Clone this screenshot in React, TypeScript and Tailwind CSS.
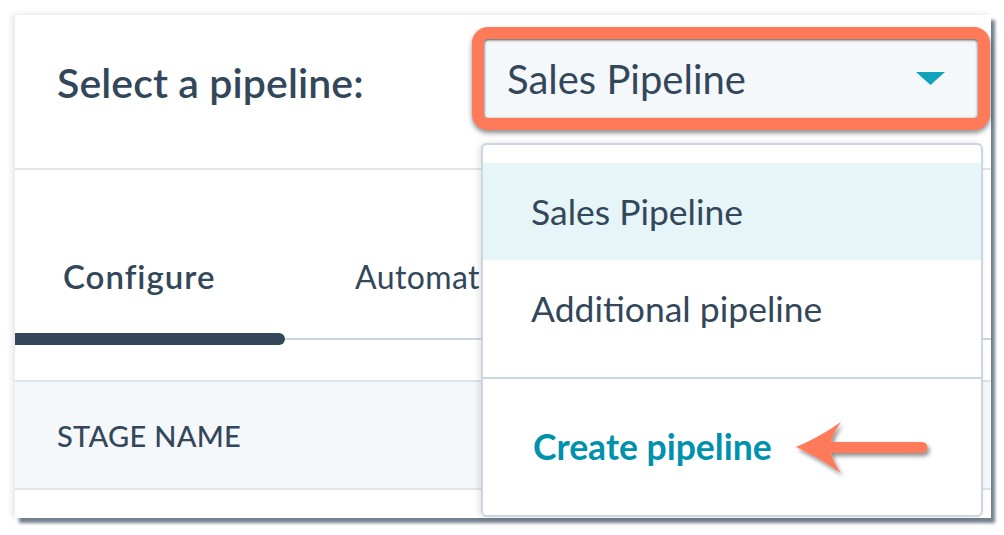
import React from 'react'

const font = { fontFamily: 'Lato, "Noto Sans", sans-serif' }

function Caret() {
  return (
    <svg width="29" height="13" viewBox="0 0 29 13">
      <path d="M0 0 H29 L14.5 13 Z" fill="#0fa3bc" />
    </svg>
  )
}

function Arrow() {
  return (
    <svg
      className="absolute z-30 left-[775px] top-[400px]"
      width="150"
      height="70"
      viewBox="0 0 150 70"
    >
      <defs>
        <filter id="sh" x="-20%" y="-40%" width="140%" height="180%">
          <feDropShadow dx="2" dy="3" stdDeviation="2" floodColor="#000" floodOpacity="0.45" />
        </filter>
      </defs>
      <path
        filter="url(#sh)"
        fill="#ff7a59"
        d="M6 32 Q28 23 51 7 Q43 18 41 27 H132 A5.5 5.5 0 0 1 132 38 H41 Q43 47 51 58 Q28 42 6 32 Z"
      />
    </svg>
  )
}

export default function App() {
  return (
    <div className="w-[1004px] h-[535px] bg-white overflow-hidden" style={font}>
      <div className="relative ml-[15px] mt-[15px] w-[976px] h-[503px] bg-white flex flex-col shadow-[4px_5px_3px_rgba(100,115,130,0.9),-3px_-1px_6px_rgba(0,0,0,0.1)]">
        {/* Header */}
        <div className="h-[155px] flex items-start justify-between pl-[42px] pr-[1px] pt-[12px] border-b-2 border-[#dfe3eb] shrink-0">
          <span className="mt-[35px] text-[41px] leading-none font-semibold tracking-[0.1px] text-[#33475b]">
            Select a pipeline:
          </span>
          <div className="relative z-10 w-[518px] h-[103px] rounded-[16px] border-[12px] border-[#ff7a59] bg-[#f5f8fa] shadow-[0_3px_5px_rgba(0,0,0,0.45)]">
            <div className="h-full rounded-[4px] flex items-center justify-between pl-[23px] pr-[33px] shadow-[inset_0_1px_3px_rgba(0,0,0,0.7)]">
              <span className="text-[40px] leading-none text-[#33475b]">Sales Pipeline</span>
              <Caret />
            </div>
          </div>
        </div>

        {/* Tabs */}
        <div className="h-[210px] shrink-0 flex flex-col justify-end pb-[35px]">
          <div className="flex items-end">
            <div className="w-[270px] flex flex-col">
              <span className="pl-[48px] text-[33px] leading-none font-semibold tracking-[1px] text-[#33475b]">Configure</span>
              <div className="mt-[40px] h-[12px] bg-[#33475b] rounded-r-full" />
            </div>
            <div className="flex-1 flex flex-col">
              <span className="pl-[70px] text-[32px] leading-none tracking-[0.4px] text-[#33475b]">Automation</span>
              <div className="mt-[40px] h-[12px] flex items-center">
                <div className="h-[2px] w-full bg-[#cbd6e2]" />
              </div>
            </div>
          </div>
        </div>

        {/* Table header */}
        <div className="h-[110px] shrink-0 flex items-center pl-[42px] bg-[#f5f8fa] border-y-2 border-[#dfe3eb]">
          <span className="text-[29px] leading-none font-medium tracking-[0.3px] text-[#33475b]">STAGE NAME</span>
        </div>
        <div className="flex-1" />

        {/* Dropdown menu */}
        <div className="absolute left-[466px] top-[128px] w-[502px] h-[374px] z-20 bg-white border-2 border-[#cbd6e2] rounded-[6px] shadow-[-2px_0_6px_rgba(0,0,0,0.12)] flex flex-col pt-[18px]">
          <div className="h-[97px] flex items-center pl-[48px] bg-[#e5f5f8]">
            <span className="text-[35.5px] leading-none text-[#33475b]">Sales Pipeline</span>
          </div>
          <div className="h-[97px] flex items-center pl-[48px]">
            <span className="text-[35.5px] leading-none text-[#33475b]">Additional pipeline</span>
          </div>
          <div className="h-[20px]" />
          <div className="flex-1 border-t-2 border-[#cbd6e2] flex items-center pl-[50px]">
            <span className="text-[35.5px] leading-none font-bold text-[#0091ae]">Create pipeline</span>
          </div>
        </div>

        <Arrow />
      </div>
    </div>
  )
}
